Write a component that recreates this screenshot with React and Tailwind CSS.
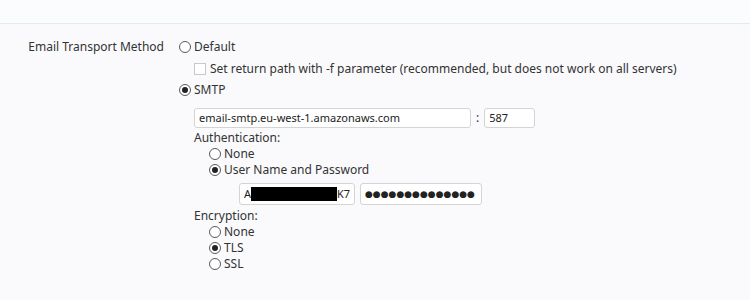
import React from "react";

function Radio({ checked, label, className = "" }) {
  return (
    <label className={`flex items-center h-4 gap-[3px] ${className}`}>
      <span className="w-3 h-3 rounded-full border border-[#5a5a5a] bg-white flex items-center justify-center shrink-0">
        {checked && <span className="w-[6px] h-[6px] rounded-full bg-[#222]" />}
      </span>
      <span>{label}</span>
    </label>
  );
}

export default function App() {
  return (
    <div
      className="w-[750px] h-[300px] bg-[#fafafc] text-[12px] text-[#333] overflow-hidden"
      style={{ fontFamily: '"Noto Sans", "DejaVu Sans", sans-serif' }}
    >
      <div className="h-6 bg-[#fbfcfd] border-b border-[#e6e9ee]" />
      <div className="flex pt-[15px]">
        <div className="w-[164px] text-right h-4 leading-4">Email Transport Method</div>
        <div className="ml-[15px] flex flex-col">
          <Radio label="Default" />
          <label className="flex items-center h-4 gap-1 ml-[15px] mt-[6px]">
            <span className="w-3 h-3 border border-[#c8c8c8] bg-white shrink-0" />
            <span>Set return path with -f parameter (recommended, but does not work on all servers)</span>
          </label>
          <Radio checked label="SMTP" className="mt-[5px]" />

          <div className="ml-[15px] flex flex-col">
            <div className="flex items-center mt-[10px]">
              <div className="w-[277px] h-5 border border-[#d4d4d4] bg-white rounded-[3px] px-1 flex items-center text-[11px] text-[#222]">
                email-smtp.eu-west-1.amazonaws.com
              </div>
              <span className="mx-[5px]">:</span>
              <div className="w-[51px] h-5 border border-[#d4d4d4] bg-white rounded-[3px] px-1 flex items-center text-[11px] text-[#222]">
                587
              </div>
            </div>
            <div className="h-4 leading-4 mt-[2px]">Authentication:</div>
            <div className="ml-[15px] flex flex-col">
              <Radio label="None" />
              <Radio checked label="User Name and Password" />
              <div className="flex gap-[5px] ml-[30px] mt-[5px]">
                <div className="w-[116px] h-[22px] border border-[#d4d4d4] bg-white rounded-[3px] pl-1 flex items-center text-[11px] text-[#222] overflow-hidden whitespace-nowrap">
                  <span>A</span>
                  <span className="w-[86px] h-[14px] bg-black shrink-0" />
                  <span>K7</span>
                </div>
                <div className="w-[122px] h-[22px] border border-[#d4d4d4] bg-white rounded-[3px] pl-1 flex items-center text-[9px] text-[#222] overflow-hidden whitespace-nowrap">
                  ●●●●●●●●●●●●●●
                </div>
              </div>
            </div>
            <div className="h-4 leading-4 mt-[3px]">Encryption:</div>
            <div className="ml-[15px] flex flex-col">
              <Radio label="None" />
              <Radio checked label="TLS" />
              <Radio label="SSL" />
            </div>
          </div>
        </div>
      </div>
    </div>
  );
}
